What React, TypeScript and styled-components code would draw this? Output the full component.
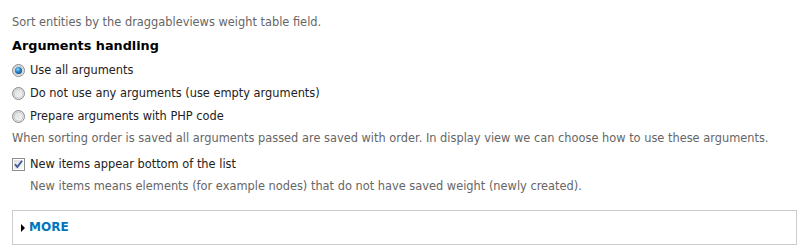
import React from "react";
import styled, { createGlobalStyle } from "styled-components";

const GlobalStyle = createGlobalStyle`
  html, body { margin: 0; padding: 0; background: #fff; }
  body {
    font-family: "DejaVu Sans", Verdana, sans-serif;
    font-size: 11.4px;
    color: #333;
  }
`;

const Page = styled.div`
  padding: 15px 10px 0 12px;
`;

const Description = styled.div<{ $indent?: boolean; $gap?: number }>`
  color: #666;
  font-size: 11.4px;
  line-height: 14px;
  margin-top: ${(p) => p.$gap ?? 0}px;
  padding-left: ${(p) => (p.$indent ? 18 : 0)}px;
  white-space: nowrap;
`;

const Title = styled.div`
  margin-top: 9px;
  font-size: 12.8px;
  font-weight: bold;
  line-height: 16px;
  color: #000;
`;

const OptionList = styled.div`
  display: flex;
  flex-direction: column;
  gap: 9px;
  margin-top: 9px;
`;

const OptionRow = styled.label<{ $gap?: number }>`
  display: flex;
  align-items: center;
  gap: 5px;
  height: 14px;
  line-height: 14px;
  margin-top: ${(p) => p.$gap ?? 0}px;
  color: #222;
  white-space: nowrap;
`;

const Marker = styled.svg`
  flex: none;
  width: 13px;
  height: 13px;
  display: block;
`;

const Fieldset = styled.div`
  margin-top: 17px;
  border: 1px solid #ccc;
  padding: 9px 8px;
  display: flex;
  align-items: center;
  gap: 4px;
  height: 15px;
`;

const Arrow = styled.span`
  width: 0;
  height: 0;
  border-left: 4px solid #000;
  border-top: 4px solid transparent;
  border-bottom: 4px solid transparent;
  margin-top: 1px;
`;

const Legend = styled.a`
  font-size: 12px;
  font-weight: bold;
  line-height: 15px;
  color: #0074bd;
  text-decoration: none;
`;

function Radio({ checked, id }: { checked?: boolean; id: string }) {
  return (
    <Marker viewBox="0 0 13 13">
      <defs>
        <linearGradient id={`rb-${id}`} x1="0" y1="0" x2="1" y2="1">
          <stop offset="0" stopColor="#d8d8d8" />
          <stop offset="1" stopColor="#fafafa" />
        </linearGradient>
        <radialGradient id={`rd-${id}`} cx="0.4" cy="0.35" r="0.7">
          <stop offset="0" stopColor="#9fdcfb" />
          <stop offset="0.45" stopColor="#2a8fd8" />
          <stop offset="1" stopColor="#0c4a86" />
        </radialGradient>
      </defs>
      <circle cx="6.5" cy="6.5" r="6" fill={`url(#rb-${id})`} stroke="#8a8a8a" strokeWidth="1" />
      <circle cx="6.5" cy="6.5" r="4.5" fill="none" stroke="#c8c8c8" strokeWidth="1" />
      {checked && <circle cx="6.5" cy="6.5" r="3.5" fill={`url(#rd-${id})`} />}
    </Marker>
  );
}

function Checkbox() {
  return (
    <Marker viewBox="0 0 13 13">
      <defs>
        <linearGradient id="cbg" x1="0" y1="0" x2="1" y2="1">
          <stop offset="0" stopColor="#dcdcdc" />
          <stop offset="1" stopColor="#fbfbfb" />
        </linearGradient>
      </defs>
      <rect x="0.5" y="0.5" width="12" height="12" fill="#fff" stroke="#8d8d8d" />
      <rect x="2" y="2" width="9" height="9" fill="url(#cbg)" />
      <path d="M3 6.2 L5.3 9 L10 2.8" fill="none" stroke="#3b55a3" strokeWidth="1.8" />
    </Marker>
  );
}

export default function App() {
  return (
    <>
      <GlobalStyle />
      <Page>
        <Description>Sort entities by the draggableviews weight table field.</Description>
        <Title>Arguments handling</Title>
        <OptionList>
          <OptionRow>
            <Radio id="a" checked />
            Use all arguments
          </OptionRow>
          <OptionRow>
            <Radio id="b" />
            Do not use any arguments (use empty arguments)
          </OptionRow>
          <OptionRow>
            <Radio id="c" />
            Prepare arguments with PHP code
          </OptionRow>
        </OptionList>
        <Description $gap={8}>
          When sorting order is saved all arguments passed are saved with order. In display view we can choose how to use these arguments.
        </Description>
        <OptionRow $gap={12}>
          <Checkbox />
          New items appear bottom of the list
        </OptionRow>
        <Description $indent $gap={8}>
          New items means elements (for example nodes) that do not have saved weight (newly created).
        </Description>
        <Fieldset>
          <Arrow />
          <Legend href="#">MORE</Legend>
        </Fieldset>
      </Page>
    </>
  );
}
